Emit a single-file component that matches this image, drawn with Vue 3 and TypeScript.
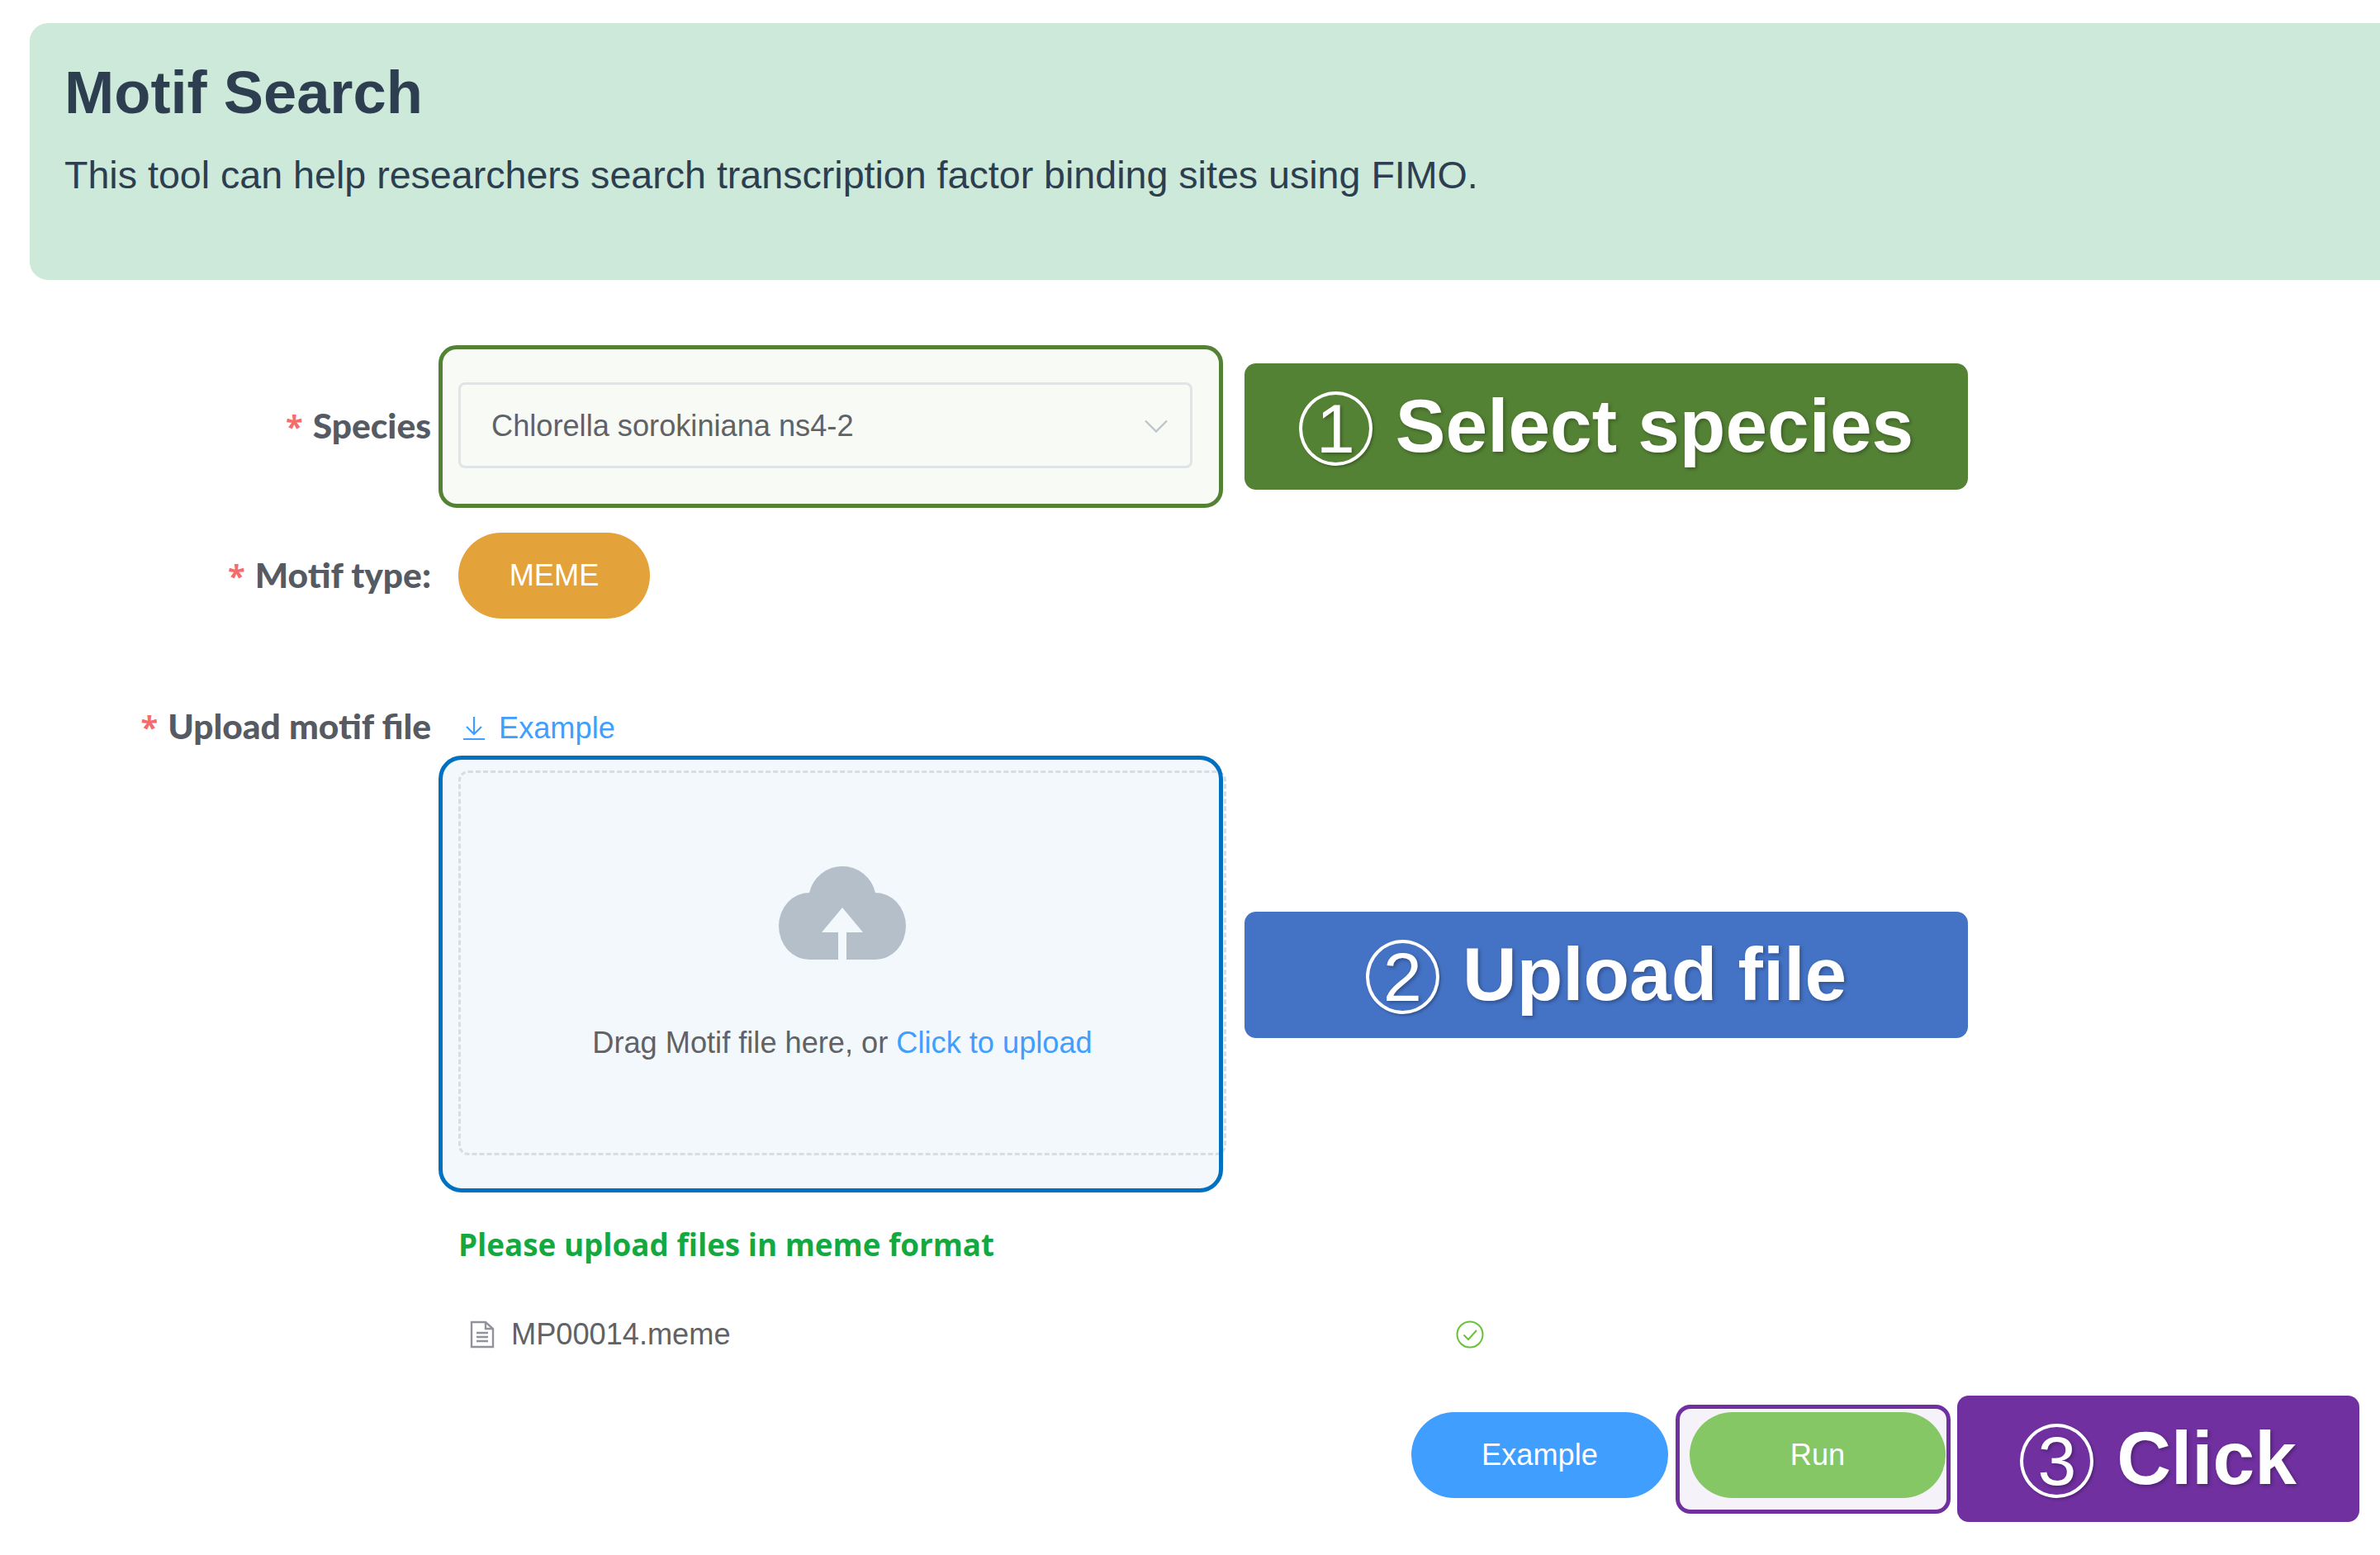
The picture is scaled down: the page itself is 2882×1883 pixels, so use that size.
<script setup lang="ts">
interface Callout { mark: string; text: string }
const species: Callout = { mark: '1', text: 'Select species' }
const upload: Callout = { mark: '2', text: 'Upload file' }
const click: Callout = { mark: '3', text: 'Click' }
</script>

<template>
  <div class="page">
    <header class="banner">
      <h1 class="title">Motif Search</h1>
      <p class="desc">This tool can help researchers search transcription factor binding sites using FIMO.</p>
    </header>

    <div class="row row-species">
      <label class="label"><span class="star">*</span>Species</label>
      <div class="mark mark-green">
        <div class="select">
          <span>Chlorella sorokiniana ns4-2</span>
          <svg class="chevron" viewBox="0 0 28 16" fill="none" stroke="#c0c4cc" stroke-width="2.4">
            <path d="M1 1.5 14 14.5 27 1.5" />
          </svg>
        </div>
      </div>
      <div class="callout callout-green">
        <span class="circled">{{ species.mark }}</span><span>{{ species.text }}</span>
      </div>
    </div>

    <div class="row row-type">
      <label class="label"><span class="star">*</span>Motif type:</label>
      <button class="pill pill-meme">MEME</button>
    </div>

    <div class="row row-upload">
      <label class="label label-upload"><span class="star">*</span>Upload motif file</label>
      <div class="upload-col">
        <a class="link">
          <svg class="dl" viewBox="0 0 28 28" fill="none" stroke="#409eff" stroke-width="2.2">
            <path d="M14 0v20M5 12l9 9 9-9M1 27h26" />
          </svg>
          Example
        </a>
        <div class="upload-row">
          <div class="mark-blue">
            <div class="drop">
              <svg class="cloud" viewBox="0 0 154 115">
                <path fill="#b4bfca" d="M37 33A41 41 0 0 1 117 33A37 40.5 0 0 1 117 114H82V81H102L77 51 52 81H72V114H37A37 40.5 0 0 1 37 33Z" />
              </svg>
              <div class="drop-text">Drag Motif file here, or <em>Click to upload</em></div>
            </div>
          </div>
          <div class="callout callout-blue">
            <span class="circled">{{ upload.mark }}</span><span>{{ upload.text }}</span>
          </div>
        </div>
      </div>
    </div>

    <p class="tip">Please upload files in meme format</p>

    <div class="file">
      <span class="file-name">
        <svg class="file-icon" viewBox="0 0 30 34" fill="none" stroke="#909399" stroke-width="2.4">
          <path d="M2 2h17l9 8v22H2zM19 2v8h9M8 15h14M8 20h14M8 25h14" />
        </svg>
        MP00014.meme
      </span>
      <svg class="check" viewBox="0 0 34 34" fill="none" stroke="#67c23a" stroke-width="2">
        <circle cx="17" cy="17" r="15.5" />
        <path d="M9.5 17.5l5.5 5.5 10-11" />
      </svg>
    </div>

    <div class="actions">
      <button class="pill pill-example">Example</button>
      <div class="mark-purple">
        <button class="pill pill-run">Run</button>
      </div>
      <div class="callout callout-purple">
        <span class="circled">{{ click.mark }}</span><span>{{ click.text }}</span>
      </div>
    </div>
  </div>
</template>

<style scoped>
.page {
  width: 2882px;
  height: 1883px;
  padding-top: 28px;
  box-sizing: border-box;
  overflow: hidden;
  background: #fff;
  font-family: "Liberation Sans", Arial, sans-serif;
  font-size: 36.2px;
  color: #606266;
}
.banner {
  margin-left: 36px;
  height: 311px;
  box-sizing: border-box;
  padding: 44px 0 0 42px;
  background: #cde9da;
  border-radius: 22px 0 0 22px;
  color: #2c3e50;
}
.title {
  margin: 0;
  font-size: 72.3px;
  line-height: 80px;
  font-weight: 700;
}
.desc {
  margin: 30px 0 0;
  font-size: 46.6px;
  line-height: 60px;
}
.row {
  display: flex;
  align-items: center;
}
.label {
  width: 522px;
  flex: none;
  box-sizing: border-box;
  padding-bottom: 2px;
  text-align: right;
  font-family: Lato, sans-serif;
  font-weight: 900;
  font-size: 42.5px;
  line-height: 50px;
  color: #555a63;
}
.star {
  color: #f56c6c;
  margin-right: 12px;
  font-family: "Open Sans", sans-serif;
  font-weight: 700;
  font-size: 38px;
}
.row-species {
  margin-top: 79px;
}
.mark-green {
  flex: none;
  width: 950px;
  height: 197px;
  box-sizing: border-box;
  margin-left: 9px;
  padding: 40px 32px 43px 19px;
  background: #f7faf5;
  border: 5px solid #548235;
  border-radius: 22px;
}
.select {
  height: 104px;
  box-sizing: border-box;
  display: flex;
  align-items: center;
  justify-content: space-between;
  padding: 2px 27px 0 37px;
  border: 3px solid #dfe4e6;
  border-radius: 8px;
}
.chevron {
  width: 28px;
  height: 16px;
}
.callout {
  flex: none;
  height: 153px;
  box-sizing: border-box;
  display: flex;
  align-items: center;
  justify-content: center;
  gap: 28px;
  padding-bottom: 2px;
  border-radius: 14px;
  color: #fff;
  font-weight: 700;
  font-size: 91px;
  text-shadow: 2px 2px 4px rgba(0, 0, 0, 0.3);
}
.circled {
  flex: none;
  width: 89px;
  height: 90px;
  margin-top: 7px;
  box-sizing: border-box;
  display: flex;
  align-items: center;
  justify-content: center;
  border: 4px solid #fff;
  border-radius: 50%;
  box-shadow: 2px 2px 3px rgba(0, 0, 0, 0.25);
  font-weight: 400;
  font-size: 84px;
  line-height: 1;
}
.callout-green {
  width: 876px;
  margin-left: 26px;
  background: #548235;
}
.row-type {
  margin-top: 30px;
}
.pill {
  display: block;
  flex: none;
  height: 104px;
  border: 0;
  padding: 0;
  border-radius: 52px;
  color: #fff;
  font-family: inherit;
  font-size: 36.2px;
}
.pill-meme {
  width: 232px;
  margin-left: 33px;
  background: #e4a23b;
}
.row-upload {
  margin-top: 100px;
  align-items: flex-start;
}
.label-upload {
  line-height: 60px;
}
.upload-col {
  margin-left: 9px;
}
.link {
  height: 66px;
  display: flex;
  align-items: center;
  gap: 16px;
  padding-left: 29px;
  color: #409eff;
}
.dl {
  width: 28px;
  height: 28px;
}
.upload-row {
  display: flex;
  align-items: flex-start;
}
.mark-blue {
  flex: none;
  width: 950px;
  height: 529px;
  box-sizing: border-box;
  padding: 18px 0 0 24px;
  background: #f3f8fc;
  border-radius: 28px;
  outline: 5px solid #0070c0;
  outline-offset: -5px;
}
.drop {
  width: 930px;
  height: 466px;
  box-sizing: border-box;
  display: flex;
  flex-direction: column;
  align-items: center;
  padding-top: 112px;
  border: 3px dashed #d9dde0;
  border-radius: 12px;
}
.cloud {
  width: 154px;
  height: 115px;
  flex: none;
}
.drop-text {
  margin-top: 70px;
  line-height: 60px;
}
.drop-text em {
  font-style: normal;
  color: #409eff;
}
.callout-blue {
  width: 876px;
  margin: 189px 0 0 26px;
  background: #4472c4;
}
.tip {
  margin: 33px 0 0 555px;
  font-family: "Open Sans", sans-serif;
  font-weight: 700;
  font-size: 36.8px;
  line-height: 60px;
  color: #14a940;
}
.file {
  width: 1228px;
  height: 60px;
  margin: 49px 0 0 569px;
  display: flex;
  align-items: center;
  justify-content: space-between;
}
.file-name {
  display: flex;
  align-items: center;
  gap: 20px;
}
.file-icon {
  width: 30px;
  height: 34px;
}
.check {
  width: 34px;
  height: 34px;
}
.actions {
  margin-top: 44px;
  padding-right: 25px;
  display: flex;
  align-items: center;
  justify-content: flex-end;
}
.pill-example {
  width: 311px;
  margin-bottom: 10px;
  background: #409eff;
}
.mark-purple {
  flex: none;
  width: 333px;
  height: 132px;
  box-sizing: border-box;
  margin-left: 9px;
  padding: 4px 1px 0 12px;
  background: #f6f2f9;
  border: 5px solid #7030a0;
  border-radius: 18px;
}
.pill-run {
  width: 310px;
  background: #85c665;
}
.callout-purple {
  width: 487px;
  margin-left: 8px;
  background: #7030a0;
}
</style>

<style>
html, body {
  margin: 0;
  background: #fff;
}
</style>
